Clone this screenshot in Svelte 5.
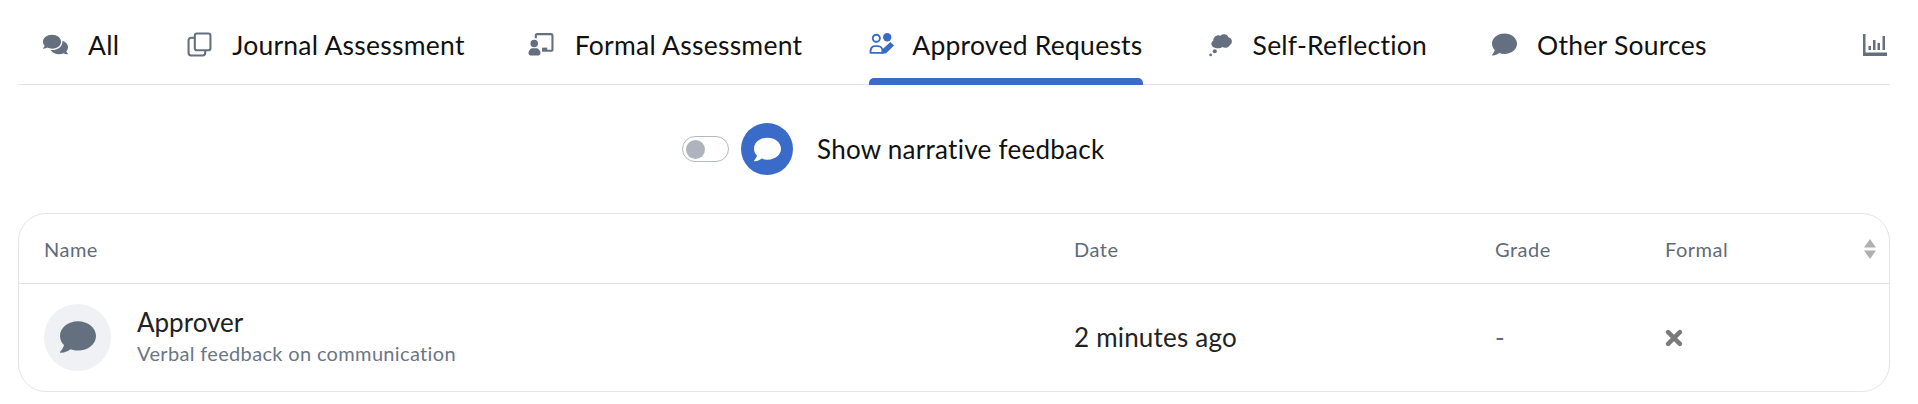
<script lang="ts">
    const commentPath = "M256 32C114.6 32 0 125.1 0 240c0 49.6 21.4 95 57 130.7C44.5 421.1 2.7 466 2.2 466.5c-2.2 2.3-2.8 5.7-1.5 8.7S4.8 480 8 480c66.3 0 116-31.8 140.6-51.4 32.7 12.3 69 19.4 107.4 19.4 141.4 0 256-93.1 256-208S397.4 32 256 32z";
</script>

<div class="page">
    <nav class="tabs">
        <div class="tab all">
            <svg class="icon" viewBox="0 0 576 512"><path fill="currentColor" d="M416 192c0-88.400-93.100-160-208-160S0 103.600 0 192c0 34.300 14.100 65.900 38 92-13.400 30.200-35.500 54.200-35.800 54.500-2.200 2.300-2.800 5.700-1.500 8.700S4.800 352 8 352c36.600 0 66.900-12.300 88.700-25 32.200 15.700 70.300 25 111.300 25 114.900 0 208-71.600 208-160zm122 220c23.900-26 38-57.700 38-92 0-66.900-53.500-124.200-129.300-148.100.9 6.600 1.300 13.300 1.300 20.100 0 105.900-107.700 192-240 192-10.800 0-21.300-.8-31.700-1.900C207.800 439.600 281.800 480 368 480c41 0 79.100-9.200 111.300-25 21.800 12.700 52.100 25 88.700 25 3.200 0 6.100-1.900 7.300-4.800 1.300-2.900.7-6.300-1.500-8.700-.3-.3-22.400-24.200-35.800-54.500z" /></svg>
            <span>All</span>
        </div>
        <div class="tab">
            <svg class="icon" viewBox="0 0 24 24" fill="none" stroke="currentColor" stroke-width="2"><rect x="7.500" y="1.500" width="15" height="16" rx="2" /><path d="M7.500 5.500H4a2.500 2.500 0 0 0-2.500 2.500v12A2.500 2.500 0 0 0 4 22.500h11a2.500 2.500 0 0 0 2.500-2.500v-2.500" /></svg>
            <span>Journal Assessment</span>
        </div>
        <div class="tab wide">
            <svg class="icon" viewBox="0 0 24 24"><g fill="currentColor"><circle cx="5.500" cy="11" r="3.600" /><path d="M0 20.500c0-3 2-5 4-5h3c2.500 0 4.500 2 4.500 5 0 1.200-.8 2-2 2H2c-1.200 0-2-.8-2-2z" /><path d="M13 15h5v2.500h-5z" /></g><path fill="none" stroke="currentColor" stroke-width="2" d="M7 6V3.500A1.500 1.500 0 0 1 8.500 2h13A1.500 1.500 0 0 1 23 3.500v13a1.500 1.500 0 0 1-1.500 1.500H13" /></svg>
            <span>Formal Assessment</span>
        </div>
        <div class="tab active">
            <svg class="icon" viewBox="0 0 24 24"><g fill="none" stroke="currentColor" stroke-width="1.800"><circle cx="7" cy="6" r="3.400" /><path d="M1.500 20c-.5-4 1.500-6.500 4-6.500h3c2.500 0 4.500 2 4.500 5 0 1-.5 1.500-1.500 1.500z" /></g><g fill="currentColor"><circle cx="17.500" cy="5" r="4" /><path d="M12 21l1-4.500 7.500-7 3.500 3.500-7.500 7.500z" /></g></svg>
            <span>Approved Requests</span>
        </div>
        <div class="tab">
            <svg class="icon" viewBox="0 0 24 24" fill="currentColor"><path d="M6.500 15C3 14.500 2 10 5 8.500 5 4 9.500 2 12 3.500c2.500-2.500 7-1.500 7.500 1.500 4 .5 4.500 6 1.500 7.500-1 2.500-5 3.500-7 2-2 1.500-5.500 1.500-7.500.5z" /><circle cx="6.500" cy="18.500" r="2" /><circle cx="2.500" cy="22" r="1.300" /></svg>
            <span>Self-Reflection</span>
        </div>
        <div class="tab">
            <svg class="icon" viewBox="0 0 512 512"><path fill="currentColor" d={commentPath} /></svg>
            <span>Other Sources</span>
        </div>
        <svg class="chart" viewBox="0 0 24 24"><g fill="currentColor"><path d="M0 1h2.500v18.500H24V23H0z" /><rect x="5.500" y="13" width="2.500" height="4" /><rect x="10" y="7" width="2.500" height="10" /><rect x="14.500" y="10" width="2.500" height="7" /><rect x="19.500" y="3" width="2.500" height="14" /></g></svg>
    </nav>

    <div class="narrative">
        <span class="toggle"><span class="knob"></span></span>
        <span class="bubble">
            <svg viewBox="0 0 512 512"><path fill="#fff" d={commentPath} /></svg>
        </span>
        <span class="narrative-label">Show narrative feedback</span>
    </div>

    <div class="table">
        <div class="row head">
            <div>Name</div>
            <div>Date</div>
            <div>Grade</div>
            <div class="formal-head">
                Formal
                <svg class="sort" viewBox="0 0 14 20"><path fill="#b0b0b0" d="M7 0l6 8.500H1zM7 20l-6-8.500h12z" /></svg>
            </div>
        </div>
        <div class="row body">
            <div class="name">
                <span class="avatar">
                    <svg viewBox="0 0 512 512"><path fill="currentColor" d={commentPath} /></svg>
                </span>
                <div>
                    <div class="title">Approver</div>
                    <div class="sub">Verbal feedback on communication</div>
                </div>
            </div>
            <div class="date">2 minutes ago</div>
            <div class="grade">-</div>
            <div class="formal">
                <svg viewBox="0 0 20 20"><path fill="none" stroke="#7a7a7a" stroke-width="5" stroke-linecap="round" d="M3.500 3.500l13 13M16.500 3.500l-13 13" /></svg>
            </div>
        </div>
    </div>
</div>

<style>
    :global(body) {
        margin: 0;
        background: #fff;
    }
    .page {
        padding: 0 28px 0 18px;
        font-family: Lato, "Noto Sans", sans-serif;
        color: #111;
    }
    .tabs {
        box-sizing: border-box;
        display: flex;
        align-items: center;
        height: 85px;
        padding: 0 3px 0 25px;
        border-bottom: 1px solid #e2e4ea;
        gap: 65px;
    }
    .tab {
        position: relative;
        display: flex;
        align-items: center;
        box-sizing: border-box;
        gap: 20px;
        height: 100%;
        padding-top: 5px;
        font-size: 26.500px;
        letter-spacing: 0.25px;
        color: #111;
        white-space: nowrap;
    }
    .all {
        margin-right: 3px;
    }
    .wide {
        margin-left: -3px;
    }
    .wide .icon {
        width: 28px;
    }
    .icon {
        width: 25px;
        height: 25px;
        color: #64707f;
        flex: none;
    }
    .active {
        margin-left: 2px;
        gap: 18px;
    }
    .active .icon {
        color: #3a6bc9;
    }
    .active::after {
        content: "";
        position: absolute;
        left: 0;
        right: 0;
        bottom: -1px;
        height: 7px;
        background: #3a6bc9;
        border-radius: 5px 5px 0 0;
    }
    .chart {
        width: 24px;
        height: 24px;
        margin-top: 5px;
        margin-left: auto;
        color: #64707f;
    }
    .narrative {
        display: flex;
        align-items: center;
        height: 128px;
        padding-left: 664px;
    }
    .toggle {
        box-sizing: border-box;
        display: flex;
        align-items: center;
        width: 47px;
        height: 26px;
        padding-left: 3px;
        border: 1px solid #b4b9c0;
        border-radius: 13px;
    }
    .knob {
        width: 19px;
        height: 19px;
        border-radius: 50%;
        background: #adb4bd;
    }
    .bubble {
        display: flex;
        align-items: center;
        justify-content: center;
        width: 52px;
        height: 52px;
        margin-left: 12px;
        border-radius: 50%;
        background: #3a6bc9;
    }
    .bubble svg {
        width: 27px;
        height: 27px;
    }
    .narrative-label {
        margin-left: 24px;
        font-size: 26px;
        letter-spacing: 0.27px;
    }
    .table {
        box-sizing: border-box;
        height: 179px;
        border: 1px solid #e2e4e8;
        border-radius: 28px;
    }
    .row {
        display: grid;
        grid-template-columns: 1030px 421px 170px 1fr;
        padding-left: 25px;
        align-items: center;
    }
    .head {
        height: 69px;
        border-bottom: 1px solid #e2e4e8;
        font-size: 20px;
        letter-spacing: 0.5px;
        color: #5f6b7c;
    }
    .formal-head {
        display: flex;
        align-items: center;
        justify-content: space-between;
        padding-right: 12px;
    }
    .sort {
        width: 14px;
        height: 20px;
    }
    .body {
        box-sizing: border-box;
        height: 108px;
        padding-bottom: 2px;
    }
    .name {
        display: flex;
        align-items: center;
        gap: 26px;
    }
    .avatar {
        display: flex;
        align-items: center;
        justify-content: center;
        width: 67px;
        height: 67px;
        border-radius: 50%;
        background: #f0f1f5;
        color: #64707f;
    }
    .avatar svg {
        width: 36px;
        height: 36px;
    }
    .title {
        font-size: 26px;
        line-height: 30px;
        margin-top: -1px;
        color: #222;
    }
    .sub {
        font-size: 20px;
        line-height: 26px;
        margin-top: 3px;
        letter-spacing: 0.34px;
        color: #6b7686;
    }
    .date {
        font-size: 26px;
        letter-spacing: 0.2px;
        color: #222;
    }
    .grade {
        font-size: 26px;
        color: #5f6b7c;
    }
    .formal {
        display: flex;
        margin-top: 2px;
    }
    .formal svg {
        width: 18px;
        height: 18px;
    }
</style>
